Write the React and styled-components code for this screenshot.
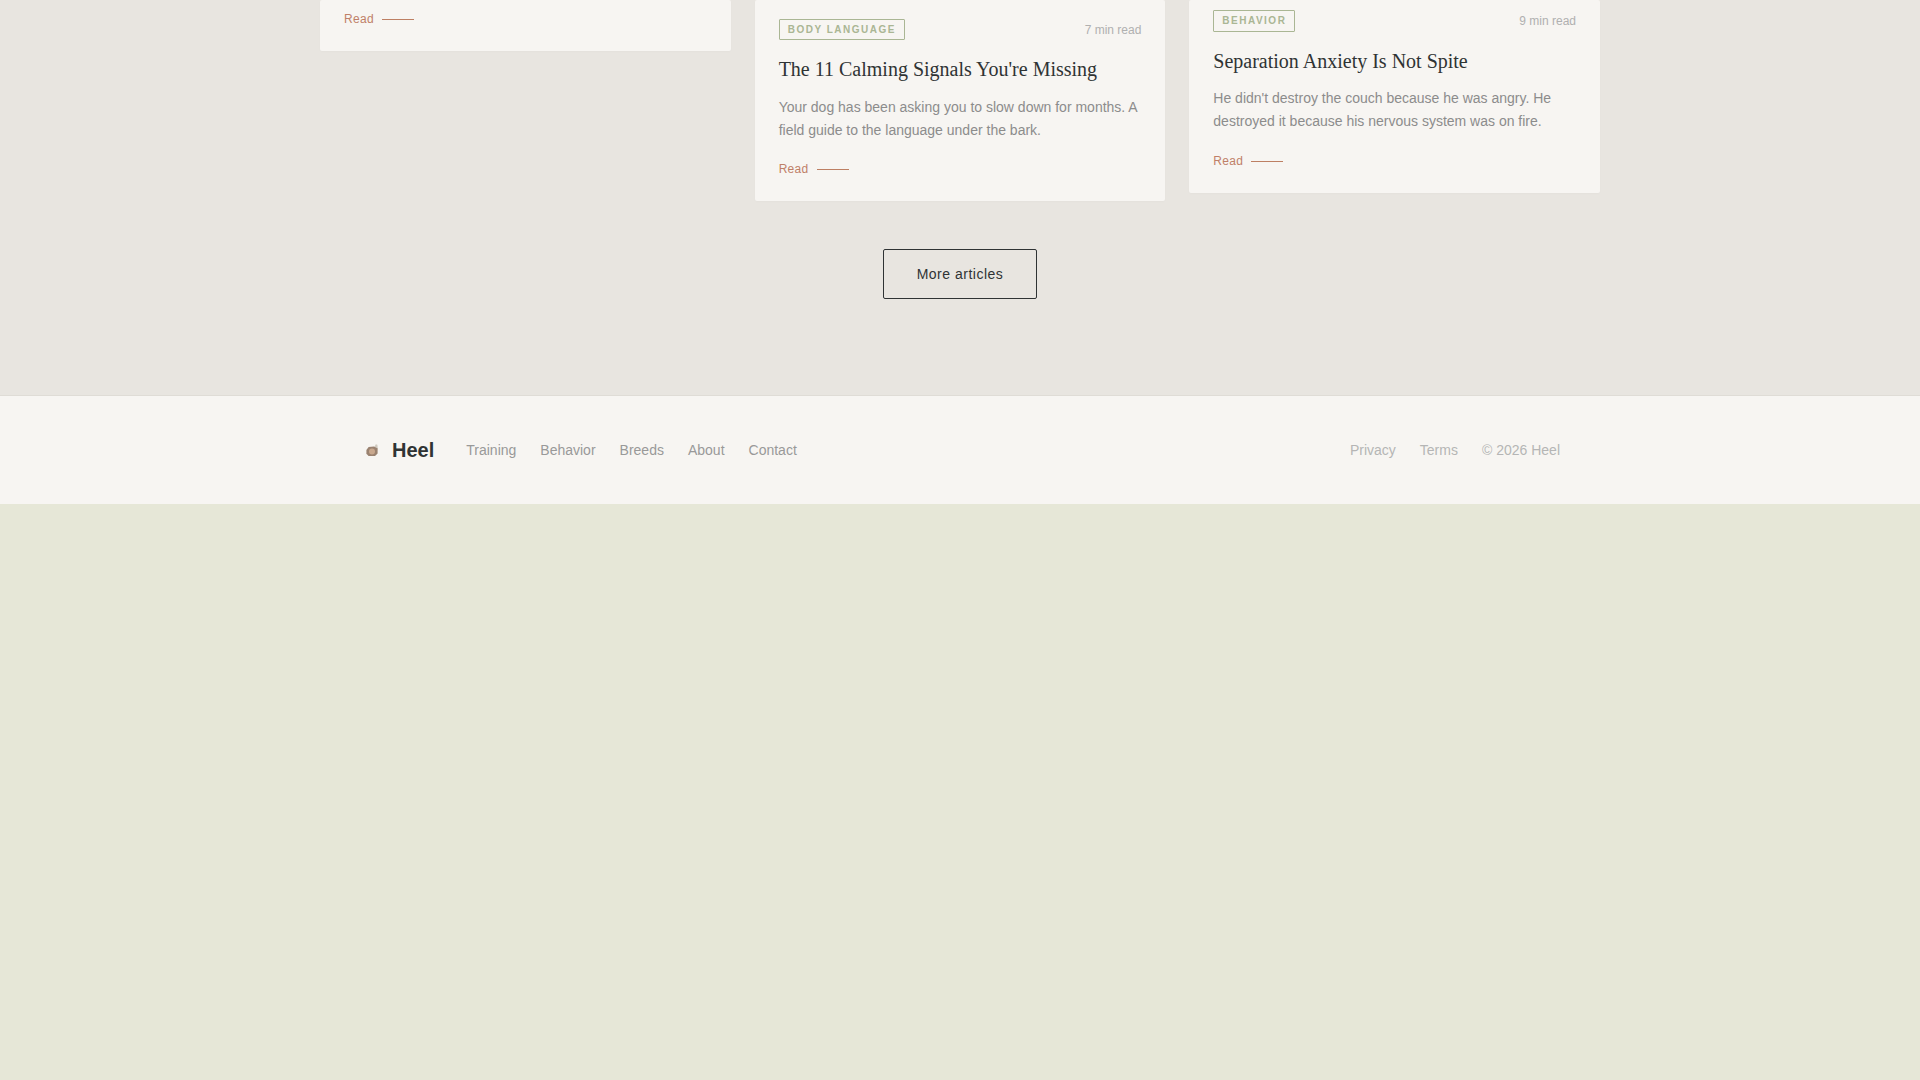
import styled, { createGlobalStyle } from "styled-components";

const GlobalStyle = createGlobalStyle`
  * { box-sizing: border-box; }
  html, body { margin: 0; padding: 0; }
  body {
    background: #e6e7d7;
    font-family: "Liberation Sans", Arial, sans-serif;
    color: #2f3334;
  }
`;

const Main = styled.main`
  background: #e8e5e0;
  padding-bottom: 96px;
`;

const Grid = styled.div`
  width: 1280px;
  margin: 0 auto;
  display: grid;
  grid-template-columns: repeat(3, 1fr);
  gap: 24px;
  align-items: start;
`;

const Card = styled.article`
  background: #f7f5f2;
  border-radius: 2px;
  padding: ${(p) => p.$top}px 24px 23px;
  box-shadow: 0 1px 2px rgba(0, 0, 0, 0.02);
`;

const Meta = styled.div`
  display: flex;
  justify-content: space-between;
  align-items: center;
  margin-bottom: 16px;
`;

const Tag = styled.span`
  border: 1px solid #aab694;
  border-radius: 1px;
  padding: 4px 8px;
  font-size: 10px;
  line-height: 11.5px;
  font-weight: 700;
  letter-spacing: 1.5px;
  text-transform: uppercase;
  color: #aab694;
`;

const ReadTime = styled.span`
  padding-top: 0.5px;
  font-size: 12px;
  color: #b0b0b0;
`;

const Title = styled.h3`
  margin: 0 0 13.5px;
  font-family: "Liberation Serif", "Times New Roman", serif;
  font-size: 20px;
  line-height: 26px;
  font-weight: 400;
  color: #2f3334;
`;

const Excerpt = styled.p`
  margin: 0 0 19.5px;
  font-size: 14px;
  line-height: 23px;
  color: #8c8c8c;
`;

const ReadLink = styled.a`
  display: flex;
  align-items: center;
  gap: 8px;
  font-size: 12px;
  line-height: 17px;
  letter-spacing: 0.3px;
  color: #bf8068;

  &::after {
    content: "";
    width: 32px;
    height: 1px;
    background: #bd7f63;
  }
`;

const MoreRow = styled.div`
  display: flex;
  justify-content: center;
  margin-top: 48px;
`;

const MoreButton = styled.button`
  width: 154px;
  height: 50px;
  background: transparent;
  border: 1px solid #2f3334;
  border-radius: 2px;
  font-family: inherit;
  font-size: 14px;
  letter-spacing: 0.5px;
  color: #2f3334;
`;

const Footer = styled.footer`
  background: #f7f5f2;
  border-top: 1px solid #dfdcd6;
  height: 109px;
  display: flex;
  align-items: center;
`;

const FooterInner = styled.div`
  width: 1200px;
  margin: 0 auto;
  display: flex;
  justify-content: space-between;
  align-items: center;
`;

const FooterLeft = styled.div`
  display: flex;
  align-items: center;
  gap: 32px;
`;

const Brand = styled.div`
  display: flex;
  align-items: center;
  gap: 14px;
  padding-left: 6px;
  font-size: 20px;
  font-weight: 700;
  color: #2f3334;
`;

const Links = styled.nav`
  display: flex;
  align-items: center;
  gap: 24px;
  font-size: 14px;
  color: ${(p) => p.$color};
`;

function BrandMark() {
  return (
    <svg width="12" height="12" viewBox="0 0 12 12">
      <path d="M8.4 3 9.8 0.2 11.4 0.8 11.8 5 8.8 5Z" fill="#cfc9bf" />
      <path d="M0.4 6 2.6 3 8 2.6 11.6 4.6 11.6 9.6 9 12 2.6 12 0.4 9.8Z" fill="#9a8270" />
      <circle cx="6" cy="7.4" r="3" fill="#c9a88e" />
    </svg>
  );
}

const articles = [
  {
    tag: "Body Language",
    time: "7 min read",
    title: "The 11 Calming Signals You're Missing",
    text: "Your dog has been asking you to slow down for months. A field guide to the language under the bark.",
    top: 18.6,
  },
  {
    tag: "Behavior",
    time: "9 min read",
    title: "Separation Anxiety Is Not Spite",
    text: "He didn't destroy the couch because he was angry. He destroyed it because his nervous system was on fire.",
    top: 10.4,
  },
];

export default function App() {
  return (
    <>
      <GlobalStyle />
      <Main>
        <Grid>
          <Card $top={11}>
            <ReadLink>Read</ReadLink>
          </Card>
          {articles.map((a) => (
            <Card key={a.title} $top={a.top}>
              <Meta>
                <Tag>{a.tag}</Tag>
                <ReadTime>{a.time}</ReadTime>
              </Meta>
              <Title>{a.title}</Title>
              <Excerpt>{a.text}</Excerpt>
              <ReadLink>Read</ReadLink>
            </Card>
          ))}
        </Grid>
        <MoreRow>
          <MoreButton>More articles</MoreButton>
        </MoreRow>
      </Main>
      <Footer>
        <FooterInner>
          <FooterLeft>
            <Brand>
              <BrandMark />
              Heel
            </Brand>
            <Links $color="#999999">
              <a>Training</a>
              <a>Behavior</a>
              <a>Breeds</a>
              <a>About</a>
              <a>Contact</a>
            </Links>
          </FooterLeft>
          <Links $color="#b5b5b5">
            <a>Privacy</a>
            <a>Terms</a>
            <span>© 2026 Heel</span>
          </Links>
        </FooterInner>
      </Footer>
    </>
  );
}
